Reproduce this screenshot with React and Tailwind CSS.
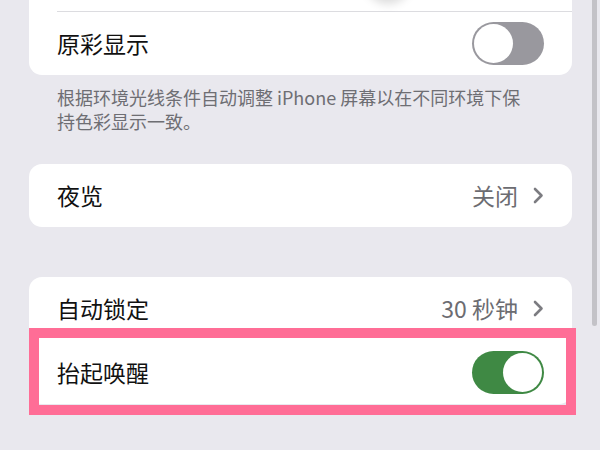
import React from "react";

const FONT = { fontFamily: '"Noto Sans CJK SC", "Noto Sans", sans-serif' };

const Chevron = () => (
  <svg width="11" height="17" viewBox="0 0 11 17" fill="none">
    <path d="M2 2l6.5 6.5L2 15" stroke="#7c7c81" strokeWidth="2.6" strokeLinecap="round" strokeLinejoin="round" />
  </svg>
);

const Toggle = ({ on }) => (
  <div
    className={`w-[72px] h-[43px] rounded-full p-[2px] flex ${
      on ? "bg-[#3f8944] justify-end" : "bg-[#99989e] justify-start"
    }`}
  >
    <div className="w-[39px] h-[39px] rounded-full bg-white" />
  </div>
);

const Row = ({ label, children }) => (
  <div className="h-[63px] pl-[28px] pr-[28px] flex items-center justify-between">
    <span className="text-[23px] text-[#111] leading-none">{label}</span>
    {children}
  </div>
);

const Value = ({ text }) => (
  <div className="flex items-center gap-[15px]">
    <span className="text-[23px] text-[#6c6c71] leading-none">{text}</span>
    <Chevron />
  </div>
);

export default function App() {
  return (
    <div className="relative w-[600px] h-[450px] overflow-hidden bg-[#e9e8ee]" style={FONT}>
      <div className="pl-[29px] pr-[28px]">
        {/* Top group */}
        <div className="relative -mt-[52px] bg-white rounded-[13px]">
          <div className="h-[63px]" />
          <div className="ml-[28px] h-px bg-[#dcdce0]" />
          <Row label="原彩显示">
            <Toggle on={false} />
          </Row>
          {/* brightness slider knob, mostly scrolled off */}
          <div className="absolute left-[336px] top-[6px] w-[46px] h-[46px] rounded-full bg-white shadow-[0_4px_10px_rgba(0,0,0,0.14)]" />
        </div>
        <p className="mt-[10px] pl-[28px] text-[18px] leading-[24px] text-[#6e6e73]">
          根据环境光线条件自动调整 iPhone 屏幕以在不同环境下保
          <br />
          持色彩显示一致。
        </p>

        {/* Night Shift */}
        <div className="mt-[31px] bg-white rounded-[13px]">
          <Row label="夜览">
            <Value text="关闭" />
          </Row>
        </div>

        {/* Lock group */}
        <div className="mt-[50px] bg-white rounded-[13px]">
          <Row label="自动锁定">
            <Value text="30 秒钟" />
          </Row>
          <div className="h-px" />
          <Row label="抬起唤醒">
            <Toggle on />
          </Row>
        </div>
      </div>

      {/* highlight annotation */}
      <div className="absolute left-[29px] top-[328px] w-[547px] h-[87px] border-[10px] border-[#ff6d96]" />

      {/* scrollbar thumb */}
      <div className="absolute right-[3px] -top-[10px] w-[5px] h-[336px] rounded-full bg-[#c3c2c7]" />
    </div>
  );
}
